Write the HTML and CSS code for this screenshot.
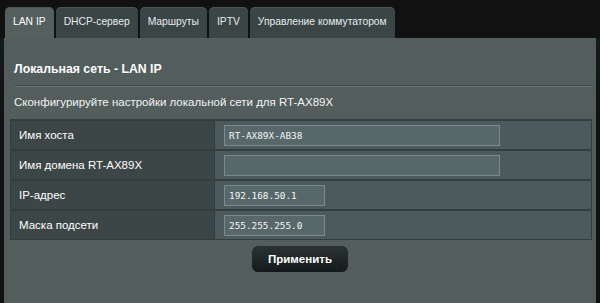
FILE: index.html
```html
<!DOCTYPE html>
<html lang="ru">
<head>
<meta charset="utf-8">
<link rel="stylesheet" href="styles.css">
</head>
<body>
<div class="frame">
  <div class="tabs">
    <div class="tab active">LAN IP</div>
    <div class="tab">DHCP-сервер</div>
    <div class="tab">Маршруты</div>
    <div class="tab">IPTV</div>
    <div class="tab">Управление коммутатором</div>
  </div>
  <div class="panel">
    <h1 class="title">Локальная сеть - LAN IP</h1>
    <div class="sep"></div>
    <p class="desc">Сконфигурируйте настройки локальной сети для RT-AX89X</p>
    <div class="form">
      <div class="row">
        <div class="label">Имя хоста</div>
        <div class="value"><div class="input wide">RT-AX89X-AB38</div></div>
      </div>
      <div class="row">
        <div class="label">Имя домена RT-AX89X</div>
        <div class="value"><div class="input wide"></div></div>
      </div>
      <div class="row">
        <div class="label">IP-адрес</div>
        <div class="value"><div class="input short">192.168.50.1</div></div>
      </div>
      <div class="row">
        <div class="label">Маска подсети</div>
        <div class="value"><div class="input short">255.255.255.0</div></div>
      </div>
    </div>
    <div class="actions">
      <button class="apply">Применить</button>
    </div>
  </div>
</div>
</body>
</html>
```

FILE: styles.css
```css
html, body {
  margin: 0;
  padding: 0;
  height: 100%;
}
body {
  background: #111111;
  font-family: "Liberation Sans", Arial, sans-serif;
  color: #ffffff;
  overflow: hidden;
}
.frame {
  display: flex;
  flex-direction: column;
  height: 303px;
  padding: 0 4px 0 4px;
  background: linear-gradient(to bottom, #15201f 0, #111 120px);
}
.tabs {
  display: flex;
  gap: 2px;
  padding: 7px 0 0 5px;
  height: 31px;
  background: #111111;
  margin: 0 -4px;
}
.tab {
  height: 31px;
  box-sizing: border-box;
  padding: 0 8px 2px;
  display: flex;
  align-items: center;
  font-family: "Liberation Sans", Arial, sans-serif;
  font-size: 10.3px;
  color: #e6eceb;
  background: #3a4546;
  border-radius: 5px 5px 0 0;
  box-shadow: inset 0 1px 0 #4a5556;
}
.tab.active {
  background: #545f5e;
  color: #ffffff;
}
.panel {
  flex: 1;
  background: #525d5c;
  padding: 0 4px 0 6px;
}
.title {
  margin: 0;
  padding: 22px 0 0 4px;
  height: 18px;
  font-size: 12.3px;
  font-weight: bold;
  line-height: 18px;
  color: #ffffff;
}
.sep {
  margin: 7px 0 0 4px;
  height: 1px;
  background: #414b4b;
  border-bottom: 1px solid #6a7675;
}
.desc {
  margin: 0;
  padding: 8px 0 0 4px;
  height: 15px;
  font-size: 11.5px;
  line-height: 15px;
  color: #f2f4f4;
}
.form {
  margin-top: 9px;
  border: 1px solid #343d3e;
  background: #343d3e;
  display: flex;
  flex-direction: column;
  gap: 2px;
  padding-top: 1px;
}
.row {
  display: flex;
  height: 28px;
}
.label {
  box-sizing: border-box;
  width: 203px;
  flex: none;
  background: #3c4647;
  font-size: 11.5px;
  padding-left: 8px;
  display: flex;
  align-items: center;
  color: #ffffff;
}
.value {
  flex: 1;
  margin-left: 1px;
  background: #4c5a5c;
  display: flex;
  align-items: center;
  padding-left: 9px;
}
.input {
  box-sizing: border-box;
  height: 21px;
  background: #586869;
  border: 1px solid #7b8b8b;
  font-family: "DejaVu Sans Mono", "Liberation Mono", monospace;
  font-size: 9.4px;
  font-weight: 500;
  color: #f4f7f7;
  padding-left: 4px;
  display: flex;
  align-items: center;
}
.input.wide { width: 276px; }
.input.short { width: 101px; }
.actions {
  display: flex;
  justify-content: center;
  padding-top: 6px;
}
.apply {
  width: 96px;
  height: 26px;
  border: none;
  border-radius: 6px;
  background: linear-gradient(to bottom, #2a3334, #141a1a);
  color: #ffffff;
  font-family: "Liberation Sans", Arial, sans-serif;
  font-size: 11.5px;
  font-weight: bold;
  margin-left: -2px;
}
```
